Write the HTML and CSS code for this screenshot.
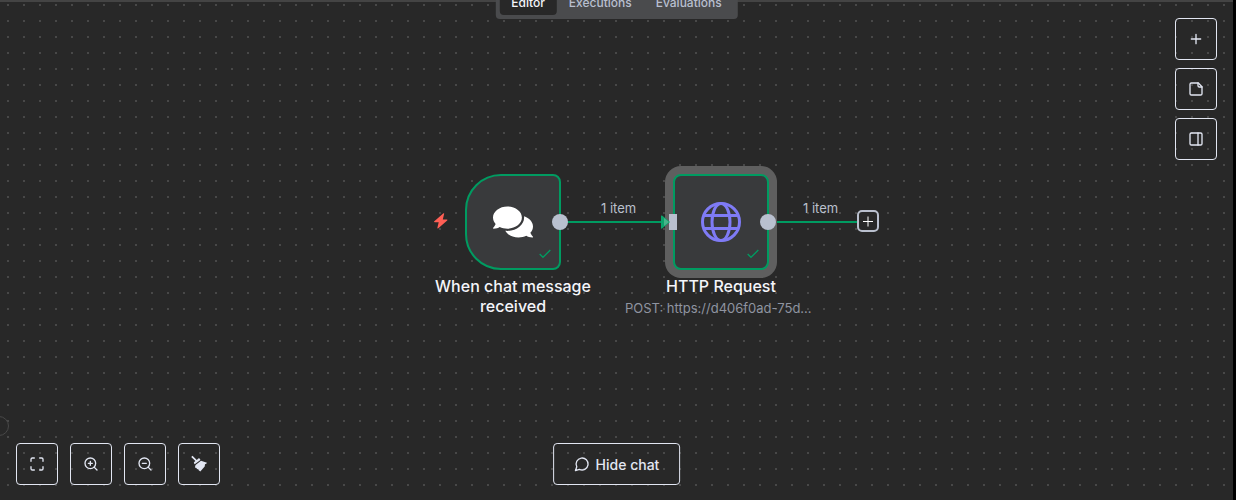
FILE: index.html
```
<!DOCTYPE html>
<html lang="en">
<head>
	<meta charset="utf-8">
	<meta name="viewport" content="width=device-width, initial-scale=1.0">
	<link rel="stylesheet" href="styles.css">
	<title>Workflow editor</title>
</head>
<body>
	<main class="canvas">
		<nav class="tabs">
			<button class="tab active">Editor</button>
			<button class="tab">Executions</button>
			<button class="tab">Evaluations</button>
		</nav>

		<div class="side-knob"></div>

		<!-- connections -->
		<svg class="edges" width="900" height="320">
			<path d="M560 222H664M768 222H858" stroke="#009b61" stroke-width="2" fill="none"/>
		</svg>
		<span class="edge-label first">1 item</span>
		<span class="edge-label second">1 item</span>

		<!-- trigger node -->
		<svg class="bolt" width="16" height="16" viewBox="0 0 16 16" fill="#ff5f55"><path d="M10.2.4 1.3 8.2c-.5.5-.3 1 .4 1h4L4.400 14.700c-.2.8.3 1 .9.500l8.900-7.800c.5-.5.3-1-.4-1h-4L11.100.9c.2-.7-.3-1-.9-.5Z"/></svg>
		<section class="node trigger">
			<div class="box">
				<svg width="40" height="40" viewBox="0 0 576 512" fill="#fff"><path d="M416 192c0-88.400-93.100-160-208-160S0 103.600 0 192c0 34.300 14.100 65.900 38 92-13.400 30.200-35.500 54.200-35.800 54.500-2.200 2.300-2.800 5.700-1.500 8.700S4.800 352 8 352c36.600 0 66.900-12.300 88.700-25 32.200 15.700 70.300 25 111.300 25 114.900 0 208-71.600 208-160zm122 220c23.900-26 38-57.700 38-92 0-66.900-53.500-124.200-129.300-148.100.9 6.600 1.300 13.300 1.300 20.100 0 105.900-107.700 192-240 192-10.800 0-21.300-.8-31.700-1.900C207.800 439.600 281.800 480 368 480c41 0 79.100-9.200 111.300-25 21.800 12.700 52.100 25 88.700 25 3.200 0 6.100-1.900 7.300-4.800 1.300-2.900.7-6.300-1.500-8.700-.3-.3-22.400-24.200-35.800-54.500z"/></svg>
				<svg class="check" width="16" height="16" viewBox="0 0 24 24"><path d="M20 6 9 17l-5-5"/></svg>
				<span class="output"></span>
			</div>
			<h2>When chat message received</h2>
		</section>

		<!-- http node -->
		<section class="node http">
			<div class="box selected">
				<svg width="40" height="40" viewBox="0 0 40 40" fill="none" stroke="#7f7bf5" stroke-width="3"><circle cx="20" cy="20" r="18.500"/><ellipse cx="20" cy="20" rx="9" ry="18.500"/><path d="M2 13.500h36M2 26.500h36"/></svg>
				<svg class="check" width="16" height="16" viewBox="0 0 24 24"><path d="M20 6 9 17l-5-5"/></svg>
				<span class="input"></span>
				<span class="output"></span>
			</div>
			<h2>HTTP Request</h2>
			<p>POST: https://d406f0ad-75d...</p>
		</section>
		<svg class="arrow" width="9" height="14" viewBox="0 0 9 14"><path d="M0 1Q0 0 1 .6L9 7 1 13.400Q0 14 0 13Z" fill="#0ba46c"/><path d="M3 3 8 7 3 11Z" fill="#48b58b"/></svg>
		<button class="add-node" aria-label="Add node">
			<svg width="12" height="12" viewBox="0 0 12 12" stroke="#fff" stroke-width="1"><path d="M1 6.500h10M6 1.500v10"/></svg>
		</button>

		<div class="side-buttons">
			<button class="btn" aria-label="Add step"><svg class="icon" viewBox="0 0 24 24"><path d="M5 12h14M12 5v14"/></svg></button>
			<button class="btn" aria-label="Add sticky note"><svg class="icon" viewBox="0 0 24 24"><path d="M15.500 3H5a2 2 0 0 0-2 2v14a2 2 0 0 0 2 2h14a2 2 0 0 0 2-2V8.500Z"/><path d="M15 3v4a2 2 0 0 0 2 2h4"/></svg></button>
			<button class="btn" aria-label="Toggle panel"><svg class="icon" viewBox="0 0 24 24"><rect x="3" y="3" width="18" height="18" rx="2"/><path d="M15 3v18"/></svg></button>
		</div>

		<div class="zoom-buttons">
			<button class="btn" aria-label="Zoom to fit"><svg class="icon" viewBox="0 0 24 24"><path d="M8 3H5a2 2 0 0 0-2 2v3M21 8V5a2 2 0 0 0-2-2h-3M3 16v3a2 2 0 0 0 2 2h3M16 21h3a2 2 0 0 0 2-2v-3"/></svg></button>
			<button class="btn" aria-label="Zoom in"><svg class="icon" viewBox="0 0 24 24"><circle cx="11" cy="11" r="8"/><path d="m21 21-4.350-4.350M11 8v6M8 11h6"/></svg></button>
			<button class="btn" aria-label="Zoom out"><svg class="icon" viewBox="0 0 24 24"><circle cx="11" cy="11" r="8"/><path d="m21 21-4.350-4.350M8 11h6"/></svg></button>
			<button class="btn" aria-label="Tidy up"><svg width="18" height="18" viewBox="0 0 18 18" fill="#e2e6f2"><path d="M1.200 1.900 2.500.7 6.800 4.900 8.300 3.500Q9.300 2.900 10 3.900L10.400 4.900 4.700 9.300 4 8.300Q3.500 7.300 4.500 6.700L5.400 6Z"/><path d="M11 5.700 17 7.700Q16.500 8.900 15 9.200L14.700 11.400 10.300 16.400 8.700 15.300 8.100 14.100 7 14.200 6.500 12.900 4.900 12.600 5.500 10Z"/></svg></button>
		</div>

		<button class="btn chat-btn">
			<svg class="icon" viewBox="0 0 24 24"><path d="M7.900 20A9 9 0 1 0 4 16.100L2 22Z"/></svg>
			Hide chat
		</button>
	</main>
</body>
</html>
```
FILE: styles.css
```
*{
	margin: 0;
	padding: 0;
	box-sizing: border-box;
	font-family: Inter, "Liberation Sans", sans-serif;
}
body{
	background: #000;
}
.canvas{
	position: relative;
	height: 100vh;
	min-height: 500px;
	margin-right: 3px;
	overflow: hidden;
	background-color: #282828;
	/* one 2px dot every 16px */
	background-image: radial-gradient(circle at 8px 5px, #484848 1px, transparent 1px);
	background-size: 16px 16px;
	box-shadow: inset 0 2px #444;
}
button{
	border: 0;
	cursor: pointer;
}
svg{
	display: block;
}

/* top tabs */
.tabs{
	position: absolute;
	top: -15px;
	left: 50%;
	transform: translateX(-50%);
	display: flex;
	padding: 4px;
	border-radius: 4px;
	background: #4a4b4d;
}
.tab{
	height: 26px;
	padding: 0 12px;
	border-radius: 4px;
	background: none;
	color: #b8bfcf;
	font-size: 12px;
	font-weight: 500;
}
.tab.active{
	background: #282828;
	color: #f4f5fa;
}
.side-knob{
	position: absolute;
	left: -11px;
	top: 416px;
	width: 20px;
	height: 20px;
	border: 1px solid #484848;
	border-radius: 50%;
}

/* nodes */
.edges{
	position: absolute;
	top: 0;
	left: 0;
}
.edge-label{
	position: absolute;
	top: 200px;
	color: #bac0cd;
	font-size: 13px;
	line-height: 16px;
}
.first{
	left: 601px;
}
.second{
	left: 803px;
}
.bolt{
	position: absolute;
	left: 433px;
	top: 213px;
}
.node{
	position: absolute;
	top: 174px;
	display: flex;
	flex-direction: column;
	align-items: center;
	width: 192px;
	text-align: center;
}
.trigger{
	left: 417px;
}
.http{
	left: 625px;
}
.box{
	position: relative;
	display: flex;
	align-items: center;
	justify-content: center;
	width: 96px;
	height: 96px;
	margin-bottom: 6px;
	border: 2px solid #009b61;
	border-radius: 8px;
	background: #393a3c;
}
.trigger .box{
	border-radius: 36px 8px 8px 36px;
}
.selected{
	box-shadow: 0 0 0 8px #5f5f5f;
}
.check{
	position: absolute;
	right: 6px;
	bottom: 6px;
	fill: none;
	stroke: #009b61;
	stroke-width: 2;
}
.output{
	position: absolute;
	top: 38px;
	right: -9px;
	width: 16px;
	height: 16px;
	border-radius: 50%;
	background: #b9c0cf;
}
.input{
	position: absolute;
	top: 38px;
	left: -6px;
	width: 8px;
	height: 16px;
	background: #b9c0cf;
}
.node h2{
	color: #f4f5fa;
	font-size: 16px;
	font-weight: 500;
	line-height: 20px;
}
.node p{
	width: 100%;
	margin-top: 4px;
	color: #8f94a0;
	font-size: 13px;
	line-height: 16px;
	text-align: left;
	white-space: nowrap;
}
.arrow{
	position: absolute;
	left: 661px;
	top: 215px;
}
.add-node{
	position: absolute;
	left: 857px;
	top: 210px;
	display: flex;
	align-items: center;
	justify-content: center;
	width: 22px;
	height: 22px;
	border: 2px solid #bac0ce;
	border-radius: 5px;
	background: #282828;
}

/* floating buttons */
.btn{
	display: flex;
	align-items: center;
	justify-content: center;
	width: 42px;
	height: 42px;
	border: 1px solid #e2e6f2;
	border-radius: 4px;
	background: none;
	color: #e2e6f2;
}
.icon{
	width: 16px;
	height: 16px;
	fill: none;
	stroke: currentColor;
	stroke-width: 2;
	stroke-linecap: round;
	stroke-linejoin: round;
}
.side-buttons{
	position: absolute;
	top: 18px;
	right: 16px;
	display: flex;
	flex-direction: column;
	gap: 8px;
}
.zoom-buttons{
	position: absolute;
	left: 16px;
	bottom: 15px;
	display: flex;
	gap: 12px;
}
.chat-btn{
	position: absolute;
	bottom: 15px;
	left: 50%;
	transform: translateX(-50%);
	gap: 6px;
	width: auto;
	padding: 0 20px;
	font-size: 14px;
	font-weight: 500;
}
```
